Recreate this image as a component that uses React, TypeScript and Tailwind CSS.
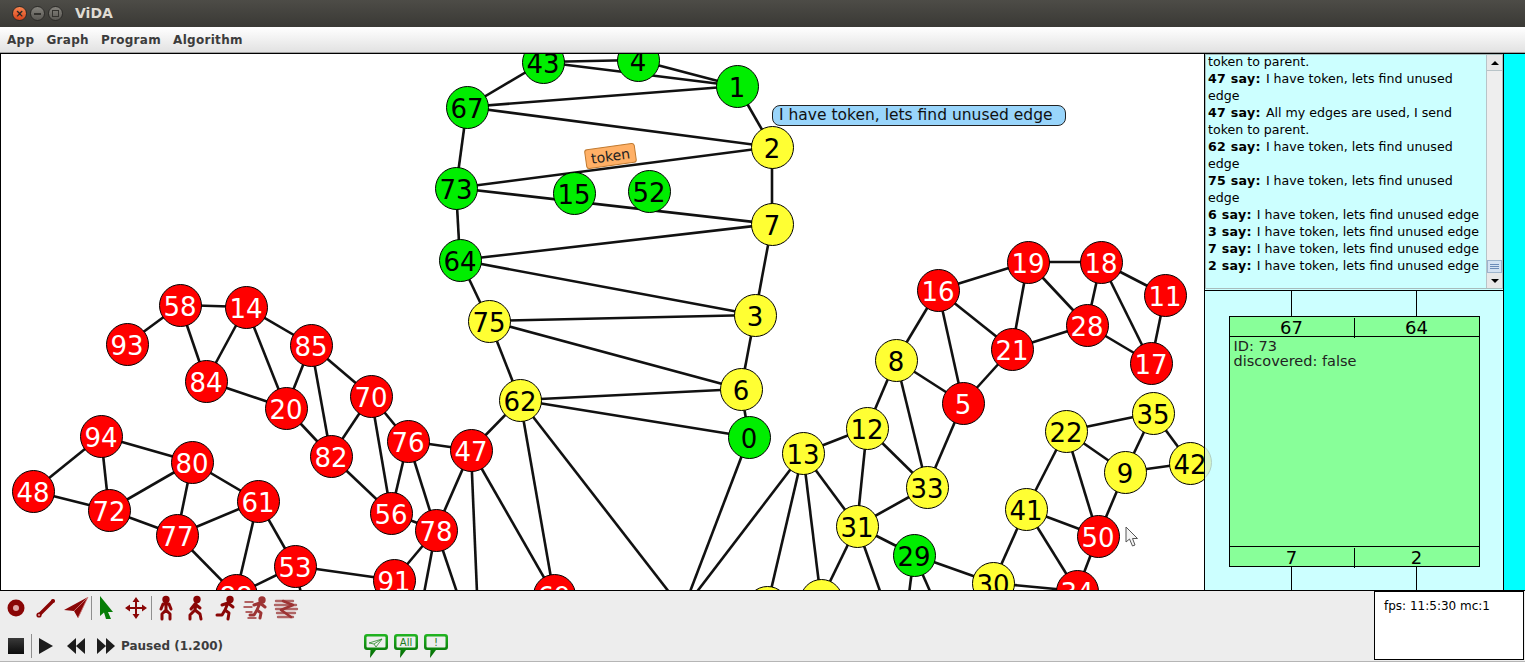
import React from 'react';

type Color = 'r' | 'g' | 'y';

// page coordinates, taken from the screen
const nodes: [string, number, number, Color][] = [
  ['43', 543, 62, 'g'], ['4', 638, 60, 'g'], ['1', 737, 86, 'g'], ['67', 467, 107, 'g'], ['2', 772, 147, 'y'],
  ['73', 456, 188, 'g'], ['15', 574, 193, 'g'], ['52', 649, 191, 'g'], ['7', 772, 224, 'y'], ['64', 460, 260, 'g'],
  ['3', 755, 315, 'y'], ['75', 489, 321, 'y'], ['6', 741, 389, 'y'], ['62', 520, 400, 'y'], ['0', 749, 437, 'g'],
  ['13', 803, 453, 'y'], ['12', 867, 428, 'y'], ['8', 896, 360, 'y'], ['16', 938, 290, 'r'], ['19', 1028, 262, 'r'],
  ['18', 1101, 262, 'r'], ['11', 1165, 295, 'r'], ['28', 1087, 325, 'r'], ['17', 1151, 363, 'r'], ['21', 1012, 349, 'r'],
  ['5', 963, 403, 'r'], ['33', 927, 487, 'y'], ['31', 857, 526, 'y'], ['29', 914, 555, 'g'], ['30', 993, 583, 'y'],
  ['41', 1026, 509, 'y'], ['22', 1066, 431, 'y'], ['35', 1153, 413, 'y'], ['9', 1125, 472, 'y'], ['42', 1190, 463, 'y'],
  ['50', 1098, 536, 'r'], ['34', 1077, 591, 'r'], ['58', 180, 305, 'r'], ['14', 246, 307, 'r'], ['93', 127, 344, 'r'],
  ['85', 311, 345, 'r'], ['84', 206, 381, 'r'], ['20', 286, 408, 'r'], ['70', 371, 396, 'r'], ['82', 331, 456, 'r'],
  ['76', 408, 441, 'r'], ['47', 471, 450, 'r'], ['56', 391, 513, 'r'], ['78', 436, 530, 'r'], ['94', 101, 436, 'r'],
  ['80', 192, 462, 'r'], ['48', 33, 491, 'r'], ['72', 109, 510, 'r'], ['61', 258, 501, 'r'], ['77', 177, 535, 'r'],
  ['53', 295, 566, 'r'], ['91', 394, 580, 'r'], ['88', 236, 595, 'r'], ['69', 554, 595, 'r'], ['23', 767, 607, 'y'],
  ['26', 821, 600, 'y'],
];

// nodes below the fold, only their edges show
const hidden: Record<string, [number, number]> = {
  h1: [683, 610], h2: [905, 625], h3: [945, 625], h4: [892, 625], h5: [308, 625], h6: [418, 625], h7: [468, 625], h8: [479, 640],
};

const edges = `43-1 43-4 4-1 43-67 67-1 67-2 73-2 73-7 67-73 73-64 1-2 2-7 7-3 64-7 64-3 64-75 75-3 75-6 75-62 3-6 6-62 6-0 62-0
62-h1 0-h1 13-h1 13-23 13-26 31-26 31-h4 31-29 29-h2 29-h3 29-30 33-31 33-12 33-8 33-5 12-8 12-13 12-31 13-31 8-16 8-5 16-19 16-21 16-5
19-18 19-21 19-28 18-28 18-11 18-17 11-17 28-17 28-21 21-5 22-35 22-9 22-41 22-50 35-9 35-42 9-42 9-50 41-50 41-34 41-30 50-34 30-34
58-14 58-93 58-84 14-84 14-85 14-20 85-20 85-82 85-70 84-20 20-82 70-82 70-76 70-56 82-56 76-47 76-56 76-78 47-78 56-78 47-h8 47-69 62-47
62-69 78-91 78-h6 78-h7 91-53 53-88 53-61 53-h5 61-77 61-80 61-88 77-80 72-80 72-77 94-80 94-72 94-48 48-72 77-88`
  .split(/\s+/)
  .map((e) => e.split('-'));

const pos = (id: string): [number, number] => {
  const n = nodes.find((m) => m[0] === id);
  return n ? [n[1], n[2]] : hidden[id];
};

const nodeClass: Record<Color, string> = {
  r: 'bg-[#ff0000] text-white',
  g: 'bg-[#00ee00] text-black',
  y: 'bg-[#ffff33] text-black',
};

const log: [string, string][] = [
  ['47 say:', 'I have token, lets find unused edge'],
  ['47 say:', 'All my edges are used, I send token to parent.'],
  ['62 say:', 'I have token, lets find unused edge'],
  ['75 say:', 'I have token, lets find unused edge'],
  ['6 say:', 'I have token, lets find unused edge'],
  ['3 say:', 'I have token, lets find unused edge'],
  ['7 say:', 'I have token, lets find unused edge'],
  ['2 say:', 'I have token, lets find unused edge'],
];

const RED = '#8a0606';

const Graph = () => (
  <div className="relative flex-1 overflow-hidden border-l border-black bg-white">
    <svg className="absolute left-0 top-0" width="1203" height="536" viewBox="1 54 1203 536">
      {edges.map(([a, b]) => {
        const [x1, y1] = pos(a);
        const [x2, y2] = pos(b);
        return <line key={a + b} x1={x1} y1={y1} x2={x2} y2={y2} stroke="#111" strokeWidth="2.6" />;
      })}
    </svg>
    {nodes.map(([id, x, y, c]) => (
      <div
        key={id}
        className={`absolute flex h-[43px] w-[43px] items-center justify-center rounded-full border-[1.5px] border-black pt-[4px] text-[26px] leading-none ${nodeClass[c]}`}
        style={{ left: x - 1 - 21.5, top: y - 54 - 21.5 }}
      >
        {id}
      </div>
    ))}
    <div className="absolute left-[771px] top-[51px] flex h-[21px] w-[294px] items-center rounded-lg border border-[#222] bg-[#99d5fb] pl-[6px] text-[15.5px] text-[#111]">
      I have token, lets find unused edge
    </div>
    <div className="absolute left-[584px] top-[92px] flex h-[20px] w-[51px] -rotate-[8deg] items-center justify-center rounded-[3px] border border-[#c07a30] bg-[#ffb066] text-[14px] text-[#222]">
      token
    </div>
    <svg className="absolute left-[1124px] top-[472px]" width="16" height="22" viewBox="0 0 16 22">
      <path d="M1 1 L1 16 L4.5 13 L7.5 20 L10 19 L7.5 12.5 L12.5 12.5 Z" fill="#f4f4f4" stroke="#555" strokeWidth="1" />
    </svg>
  </div>
);

const Scrollbar = () => (
  <div className="flex w-[16px] shrink-0 flex-col border-l border-[#b8c4c8] bg-[#eeeeee]">
    <div className="flex h-[16px] items-center justify-center border-b border-[#b8c4c8] bg-[#e8e8e8]">
      <div className="h-0 w-0 border-x-[4px] border-b-[4px] border-x-transparent border-b-black" />
    </div>
    <div className="flex-1" />
    <div className="flex h-[13px] flex-col items-center justify-center gap-px border border-[#9db4cc] bg-[#d4e2f2]">
      <div className="h-px w-[9px] bg-[#6c8cb8]" />
      <div className="h-px w-[9px] bg-[#6c8cb8]" />
      <div className="h-px w-[9px] bg-[#6c8cb8]" />
    </div>
    <div className="flex h-[15px] items-center justify-center bg-[#e8e8e8]">
      <div className="h-0 w-0 border-x-[4px] border-t-[4px] border-x-transparent border-t-black" />
    </div>
  </div>
);

const LogPanel = () => (
  <div className="flex h-[235px] shrink-0 border border-[#a8bcbc] bg-[#ccffff]">
    <div className="flex-1 overflow-hidden pl-[2px] pr-[1px] text-[12.6px] leading-[17px] text-black">
      <div className="-mt-[2px]">
        <p>token to parent.</p>
        {log.map(([who, what], i) => (
          <p key={i}>
            <b className="mr-px tracking-[0.3px]">{who}</b> {what}
          </p>
        ))}
      </div>
    </div>
    <Scrollbar />
  </div>
);

const Stubs = () => (
  <div className="grid h-[25px] w-[251px] shrink-0 grid-cols-2">
    <div className="mx-auto w-px bg-black" />
    <div className="mx-auto w-px bg-black" />
  </div>
);

const NodeCard = () => (
  <div className="relative flex flex-1 flex-col items-center overflow-hidden border-t border-black bg-[#ccffff]">
    <Stubs />
    <div className="flex h-[251px] w-[251px] shrink-0 flex-col border border-black bg-[#88ff99] text-black">
      <div className="grid h-[20px] grid-cols-[125px_1fr] border-b border-black pt-px text-[18px] leading-[20px]">
        <div className="border-r border-black text-center">67</div>
        <div className="text-center">64</div>
      </div>
      <div className="flex-1 pl-[4px] pt-[2px] text-[14.5px] leading-[15px] text-[#222]">
        <div>ID: 73</div>
        <div>discovered: false</div>
      </div>
      <div className="grid h-[20px] grid-cols-[125px_1fr] border-t border-black pt-px text-[18px] leading-[20px]">
        <div className="border-r border-black text-center">7</div>
        <div className="text-center">2</div>
      </div>
    </div>
    <Stubs />
    <div className="absolute -left-[36px] top-[150px] h-[43px] w-[43px] rounded-full border border-[#b0cfc4] bg-[#d4f4cc]" />
  </div>
);

const Tool = ({ children }: { children: React.ReactNode }) => (
  <div className="flex w-[30px] items-center justify-center">{children}</div>
);

const Sep = () => <div className="my-auto -mr-px h-[24px] w-px bg-[#8f8f8f]" />;

const Fig = ({ children, blur }: { children: React.ReactNode; blur?: boolean }) => (
  <svg width="26" height="26" viewBox="0 0 26 26" className={blur ? 'opacity-80 blur-[0.6px]' : ''}>
    <g fill="none" stroke={RED} strokeWidth="3" strokeLinecap="round" strokeLinejoin="round">
      {children}
    </g>
  </svg>
);

const Bubble = ({ children }: { children: React.ReactNode }) => (
  <svg width="26" height="26" viewBox="0 0 26 26">
    <defs>
      <linearGradient id="bubbleGreen" x1="0" y1="0" x2="0" y2="1">
        <stop offset="0" stopColor="#22b522" />
        <stop offset="1" stopColor="#006600" />
      </linearGradient>
    </defs>
    <path d="M4 1 H22 Q25 1 25 4 V14 Q25 17 22 17 H13 L7 25 L7.5 17 H4 Q1 17 1 14 V4 Q1 1 4 1 Z" fill="url(#bubbleGreen)" />
    <rect x="3.5" y="3.5" width="19" height="11" rx="1" fill="#eeeeee" />
    {children}
  </svg>
);

const Toolbar = () => (
  <div className="flex h-[71px] border-b border-[#b5b5b5] bg-[#ededed]">
    <div className="flex-1 pl-px">
      <div className="flex h-[33px]">
        <Tool>
          <svg width="20" height="20" viewBox="0 0 20 20">
            <circle cx="10" cy="10" r="8.5" fill={RED} />
            <circle cx="10" cy="10" r="3" fill="#e0a8a8" />
          </svg>
        </Tool>
        <Tool>
          <svg width="24" height="24" viewBox="0 0 24 24">
            <line x1="5" y1="19" x2="19" y2="5" stroke={RED} strokeWidth="3.4" strokeLinecap="round" />
            <circle cx="5" cy="19" r="2.6" fill={RED} />
            <circle cx="5" cy="19" r="1" fill="#e0a8a8" />
            <circle cx="19" cy="5" r="2" fill={RED} />
          </svg>
        </Tool>
        <Tool>
          <svg width="26" height="24" viewBox="0 0 26 24">
            <path d="M25 1 L1 14 L11 15 L15 22 L18 16 Z" fill={RED} />
            <path d="M25 1 L11 15 M25 1 L15 22" stroke="#d08080" strokeWidth="0.8" />
          </svg>
        </Tool>
        <Sep />
        <Tool>
          <svg width="16" height="25" viewBox="0 0 16 25">
            <path d="M2 1 L15 17 L10 17 L13 24 L8 24 L6 17.5 L2 21 Z" fill="#067d06" />
          </svg>
        </Tool>
        <Tool>
          <svg width="24" height="24" viewBox="0 0 24 24" fill={RED}>
            <path d="M11 4 H13 V20 H11 Z M3 11 H21 V13 H3 Z" />
            <path d="M12 1 L15.5 6 H8.5 Z M12 23 L15.5 18 H8.5 Z M1 12 L6 8.5 V15.5 Z M23 12 L18 8.5 V15.5 Z" />
          </svg>
        </Tool>
        <Sep />
        <Tool>
          <Fig>
            <circle cx="13" cy="4.5" r="2.2" fill={RED} />
            <path d="M13 8 V15 M8 14 L10 9 H16 L18 14 M13 15 L9 19 V24 M13 15 L17 19 V24" />
          </Fig>
        </Tool>
        <Tool>
          <Fig>
            <circle cx="14" cy="4.5" r="2.2" fill={RED} />
            <path d="M13 8 L12 15 M8 14 L12 9 L17 13 M12 15 L7 20 L7 24 M12 15 L17 19 L18 24" />
          </Fig>
        </Tool>
        <Tool>
          <Fig>
            <circle cx="17" cy="4.5" r="2.2" fill={RED} />
            <path d="M15 8 L12 15 M9 10 L15 8 L20 12 M12 15 L16 18 L15 24 M12 15 L9 20 L4 20" />
          </Fig>
        </Tool>
        <Tool>
          <Fig blur>
            <circle cx="19" cy="5" r="2.2" fill={RED} />
            <path d="M17 8 L14 15 M11 10 L17 8 L22 12 M14 15 L18 18 L17 23 M14 15 L11 20 L7 20" />
            <path d="M2 7 H10 M1 12 H9 M3 17 H9 M5 23 H13" strokeWidth="1.4" />
          </Fig>
        </Tool>
        <Tool>
          <Fig blur>
            <path d="M3 6 H20 M2 10 H23 M3 14 H24 M4 18 H22 M5 22 H20" strokeWidth="2.4" stroke="#a04444" />
            <path d="M10 6 L20 10 L8 15 L18 22" strokeWidth="2.6" />
          </Fig>
        </Tool>
      </div>
      <div className="mt-[7px] flex h-[30px]">
        <Tool>
          <div className="h-[16px] w-[16px] bg-gradient-to-b from-[#3a3a3a] to-[#0c0c0c]" />
        </Tool>
        <Sep />
        <Tool>
          <svg width="16" height="18" viewBox="0 0 16 18">
            <path d="M1 1 L15 9 L1 17 Z" fill="#1c1c1c" />
          </svg>
        </Tool>
        <Tool>
          <svg width="20" height="18" viewBox="0 0 20 18" fill="#1c1c1c">
            <path d="M10 1 V17 L1 9 Z M19 1 V17 L10 9 Z" />
          </svg>
        </Tool>
        <Tool>
          <svg width="20" height="18" viewBox="0 0 20 18" fill="#1c1c1c">
            <path d="M1 1 V17 L10 9 Z M10 1 V17 L19 9 Z" />
          </svg>
        </Tool>
        <div className="flex w-[240px] items-center text-[12px] font-bold text-[#3c3c3c]">Paused (1.200)</div>
        <Tool>
          <Bubble>
            <path d="M19 6 L6 10 L11 11 L13 14 Z M19 6 L11 11" fill="none" stroke="#2a8a2a" strokeWidth="0.8" />
          </Bubble>
        </Tool>
        <Tool>
          <Bubble>
            <text x="13" y="13" textAnchor="middle" fontSize="10" fill="#1c7a1c">All</text>
          </Bubble>
        </Tool>
        <Tool>
          <Bubble>
            <text x="13" y="13" textAnchor="middle" fontSize="10" fill="#1c7a1c">!</text>
          </Bubble>
        </Tool>
      </div>
    </div>
    <div className="mb-px mr-px w-[150px] border border-black bg-white pl-[9px] pt-[7px] text-[12px] leading-[15px] text-black">
      fps: 11:5:30 mc:1
    </div>
  </div>
);

const WinBtn = ({ kind }: { kind: 'x' | 'min' | 'max' }) => (
  <div
    className={`flex h-[15px] w-[15px] items-center justify-center rounded-full border border-[#2c2b28] text-[#222] ${
      kind === 'x' ? 'bg-gradient-to-b from-[#f8844f] to-[#d8431a]' : 'bg-gradient-to-b from-[#85837d] to-[#5a5853]'
    }`}
  >
    {kind === 'x' && <span className="text-[10px] font-bold leading-none">×</span>}
    {kind === 'min' && <div className="h-[2px] w-[7px] bg-[#33322e]" />}
    {kind === 'max' && <div className="h-[7px] w-[7px] border border-[#33322e]" />}
  </div>
);

export default function App() {
  return (
    <div className="flex h-[662px] w-[1525px] flex-col overflow-hidden bg-[#ededed] font-['DejaVu_Sans',sans-serif]">
      {/* title bar */}
      <div className="flex h-[27px] items-center bg-gradient-to-b from-[#4d4c47] to-[#3a3935] pl-[12px]">
        <div className="flex gap-[3px]">
          <WinBtn kind="x" />
          <WinBtn kind="min" />
          <WinBtn kind="max" />
        </div>
        <span className="ml-[12px] text-[14px] font-bold text-[#dfdbd2]">ViDA</span>
      </div>

      {/* menu */}
      <div className="flex h-[26px] items-center gap-[12px] border-b border-[#a0a0a0] bg-gradient-to-b from-white to-[#e2e2e2] pl-[7px] text-[12px] font-bold tracking-[0.3px] text-[#3c3c3c]">
        <span>App</span>
        <span>Graph</span>
        <span>Program</span>
        <span>Algorithm</span>
      </div>

      {/* main */}
      <div className="flex h-[538px] border-y border-black">
        <Graph />
        <div className="flex w-[300px] flex-col border-x border-black">
          <LogPanel />
          <div className="h-[1px] shrink-0 bg-[#ccffff]" />
          <NodeCard />
        </div>
        <div className="w-[21px] bg-[#00ffff]" />
      </div>

      <Toolbar />
    </div>
  );
}
